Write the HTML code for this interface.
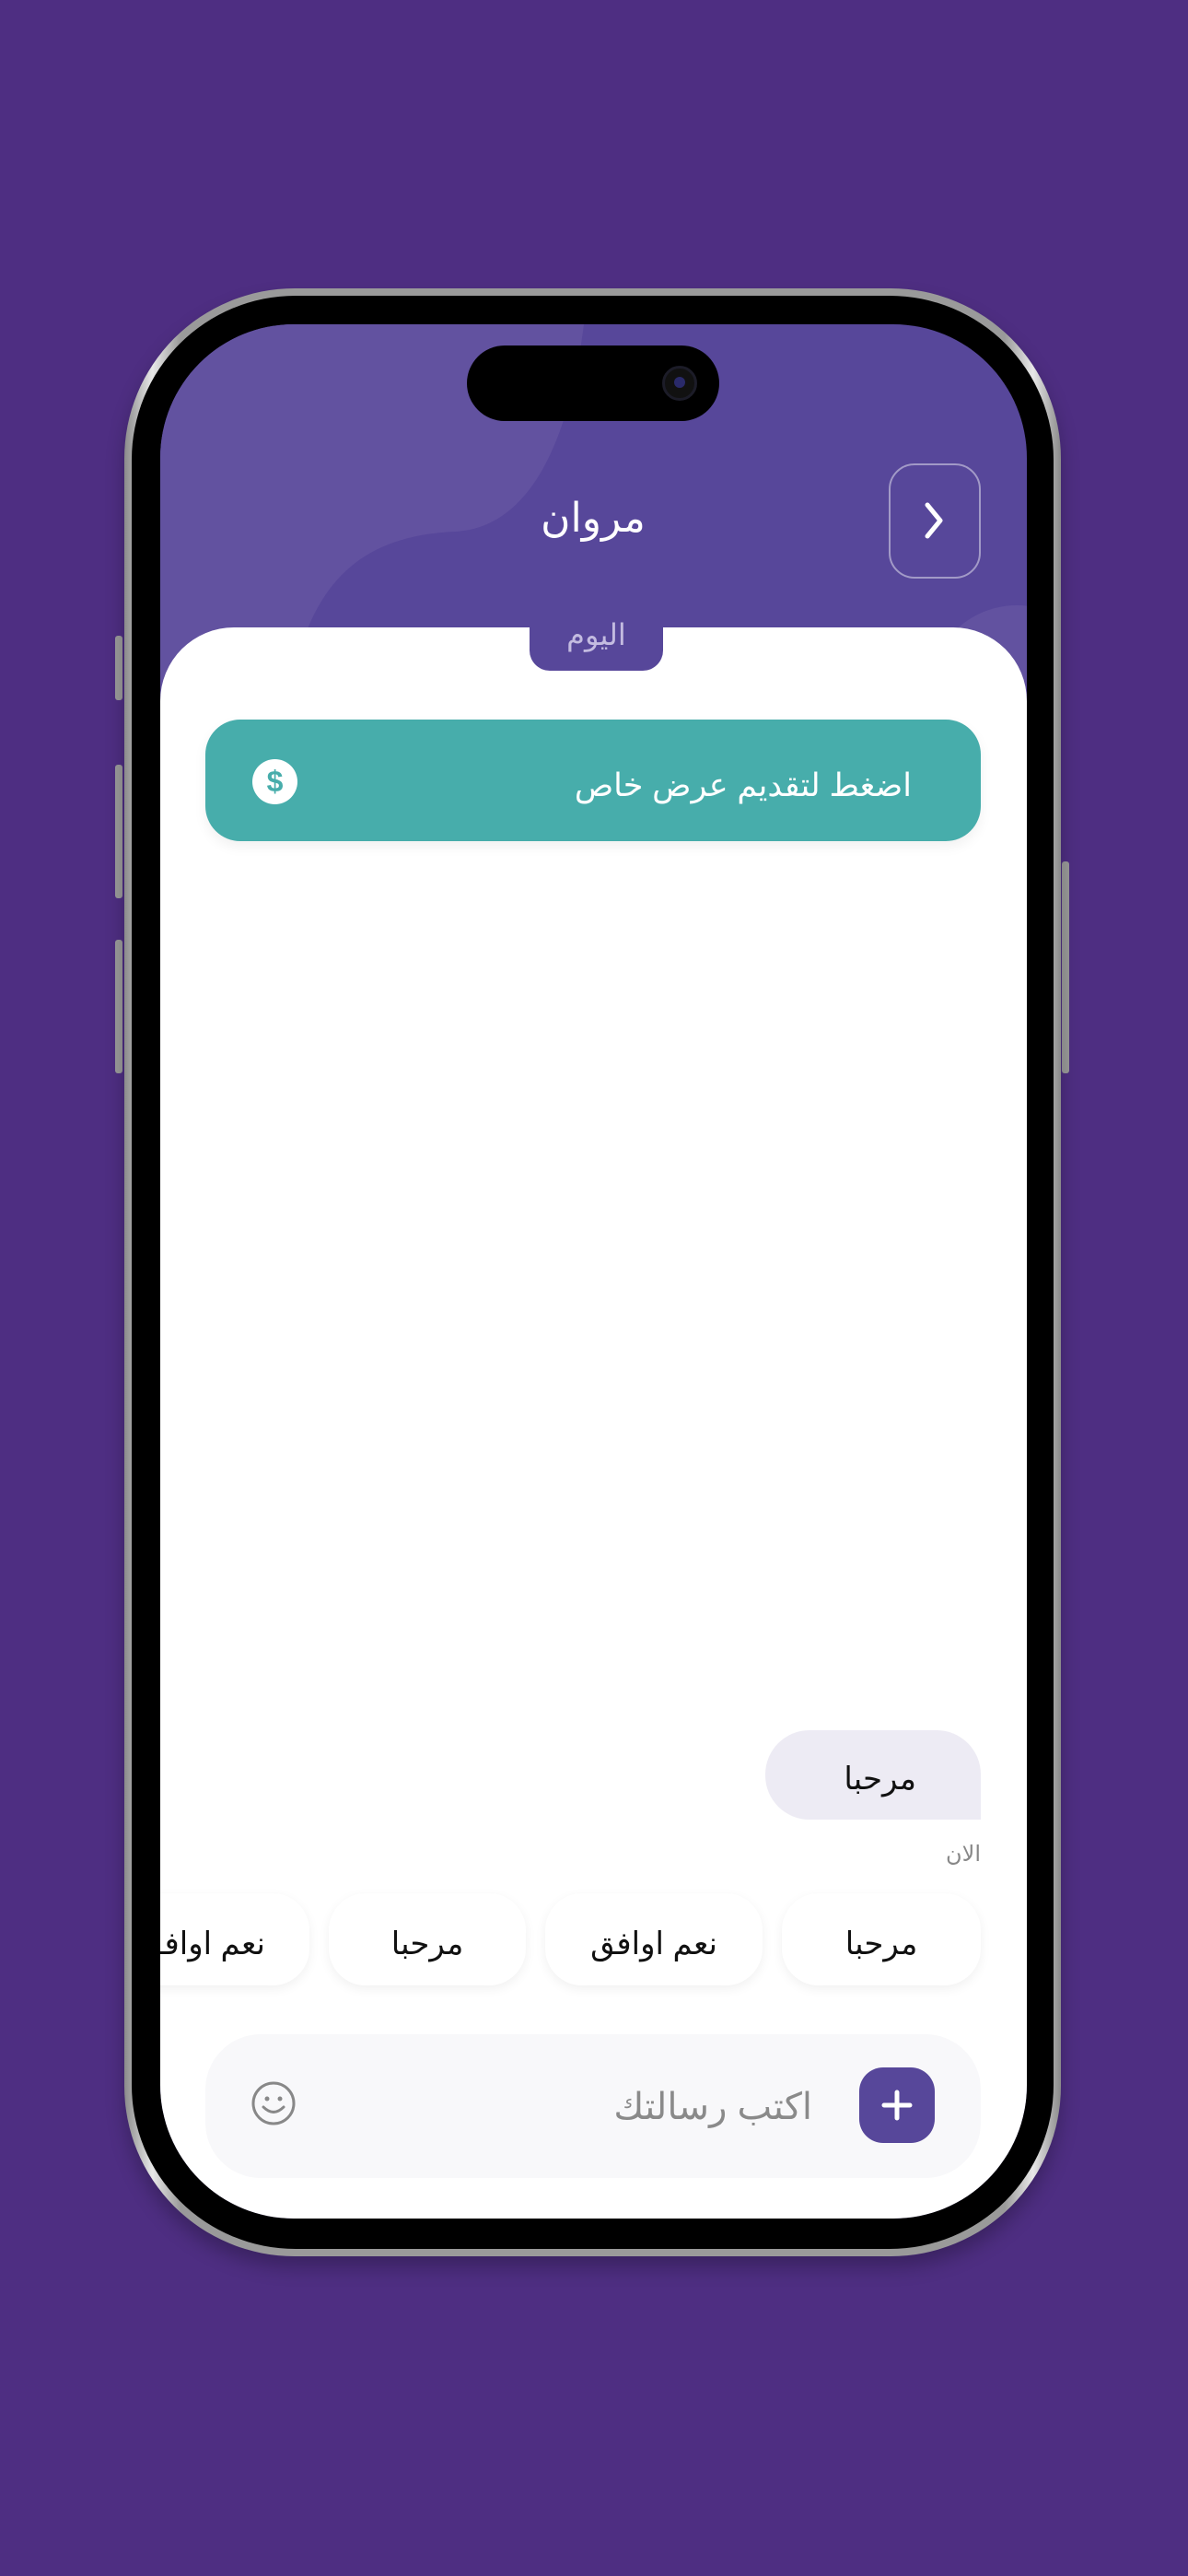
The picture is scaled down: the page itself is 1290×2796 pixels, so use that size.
<!DOCTYPE html>
<html><head><meta charset="utf-8"><style>
*{margin:0;padding:0;box-sizing:border-box}
body{width:1290px;height:2796px;background:#4e2e82;position:relative;overflow:hidden;font-family:"Liberation Sans","DejaVu Sans",sans-serif}
.frame{position:absolute;left:135px;top:313px;width:1017px;height:2136px;border-radius:185px;background:linear-gradient(90deg,#8a8a8a,#e8e8e8 3%,#9a9a9a 6%,#9a9a9a 94%,#e8e8e8 97%,#8a8a8a);box-shadow:0 12px 20px rgba(0,0,0,.25)}
.bezel{position:absolute;left:143px;top:321px;width:1001px;height:2120px;border-radius:178px;background:#000}
.btn{position:absolute;background:#9a9a9a;border-radius:3px}
.screen{position:absolute;left:174px;top:352px;width:941px;height:2056px;border-radius:145px;overflow:hidden;background:#57479a}
.abs{position:absolute}
.sheet{position:absolute;left:0;top:329px;width:941px;height:1800px;background:#fff;border-radius:80px 80px 0 0}
.notch{position:absolute;left:401px;top:329px;width:145px;height:47px;background:#57479a;border-radius:0 0 22px 22px}
.txt{position:absolute;direction:rtl;white-space:nowrap}
.chip{position:absolute;top:1703px;height:100px;padding-top:10px;background:#fff;border-radius:40px;box-shadow:0 4px 12px rgba(0,0,0,.06);font-size:34px;color:#111;display:flex;align-items:center;justify-content:center;direction:rtl;white-space:nowrap}
</style></head><body>
<div class="btn" style="left:125px;top:690px;width:8px;height:70px"></div>
<div class="btn" style="left:125px;top:830px;width:8px;height:145px"></div>
<div class="btn" style="left:125px;top:1020px;width:8px;height:145px"></div>
<div class="btn" style="left:1153px;top:935px;width:8px;height:230px"></div>
<div class="frame"></div>
<div class="bezel"></div>
<div class="screen">
  <svg class="abs" style="left:0;top:0" width="941" height="400">
    <path d="M0 0 H460 C450 80 420 220 320 225 C200 230 160 300 140 400 H0 Z" fill="#6252a0"/>
    <circle cx="930" cy="400" r="95" fill="#6252a0"/>
  </svg>
  <div class="abs" style="left:333px;top:23px;width:274px;height:82px;border-radius:41px;background:#000"></div>
  <div class="abs" style="left:545px;top:45px;width:38px;height:38px;border-radius:50%;background:#111;border:3px solid #1c1c28"><div style="margin:9px auto;width:12px;height:12px;border-radius:50%;background:#2a2a6a"></div></div>
  <div class="abs" style="left:791px;top:151px;width:100px;height:125px;border:2px solid rgba(255,255,255,.45);border-radius:28px"></div>
  <svg class="abs" style="left:825px;top:190px" width="32" height="46"><path d="M8 6 L22 23 L8 40" stroke="#fff" stroke-width="5" fill="none" stroke-linecap="round" stroke-linejoin="round"/></svg>
  <div class="txt" style="left:360px;width:220px;text-align:center;top:185px;font-size:44px;color:#fff">مروان</div>
  <div class="sheet"></div>
  <div class="notch"></div>
  <div class="txt" style="left:401px;width:145px;text-align:center;top:318px;font-size:32px;color:#c3bbe0">اليوم</div>
  <div class="abs" style="left:49px;top:429px;width:842px;height:132px;background:#47adab;border-radius:38px;box-shadow:0 6px 14px rgba(0,0,0,.06)"></div>
  <div class="txt" style="right:125px;top:481px;font-size:35px;color:#fff">اضغط لتقديم عرض خاص</div>
  <div class="abs" style="left:100px;top:472px;width:49px;height:49px;border-radius:50%;background:#fff;color:#47adab;font-size:32px;font-weight:bold;text-align:center;line-height:49px">$</div>
  <div class="abs" style="left:657px;top:1526px;width:234px;height:97px;background:#edebf4;border-radius:48px 48px 0 48px"></div>
  <div class="txt" style="right:120px;top:1559px;font-size:34px;color:#111">مرحبا</div>
  <div class="txt" style="right:50px;top:1646px;font-size:24px;color:#888">الان</div>
  <div class="chip" style="left:675px;width:216px">مرحبا</div>
  <div class="chip" style="left:418px;width:236px">نعم اوافق</div>
  <div class="chip" style="left:183px;width:214px">مرحبا</div>
  <div class="chip" style="left:-60px;width:222px;justify-content:flex-start;padding-right:48px;overflow:hidden">نعم اوافق</div>
  <div class="abs" style="left:49px;top:1856px;width:842px;height:156px;background:#f8f8fa;border-radius:60px"></div>
  <div class="abs" style="left:759px;top:1892px;width:82px;height:82px;background:#57479a;border-radius:26px"></div>
  <svg class="abs" style="left:759px;top:1892px" width="82" height="82"><path d="M41 27 V55 M27 41 H55" stroke="#fff" stroke-width="5" stroke-linecap="round"/></svg>
  <div class="txt" style="right:233px;top:1912px;font-size:40px;color:#8a8a8a">اكتب رسالتك</div>
  <svg class="abs" style="left:98px;top:1906px" width="50" height="50"><circle cx="25" cy="25" r="22" stroke="#888" stroke-width="3" fill="none"/><circle cx="18" cy="20" r="2.5" fill="#888"/><circle cx="32" cy="20" r="2.5" fill="#888"/><path d="M14 29 Q25 40 36 29" stroke="#888" stroke-width="3" fill="none" stroke-linecap="round"/></svg>
</div>
</body></html>
